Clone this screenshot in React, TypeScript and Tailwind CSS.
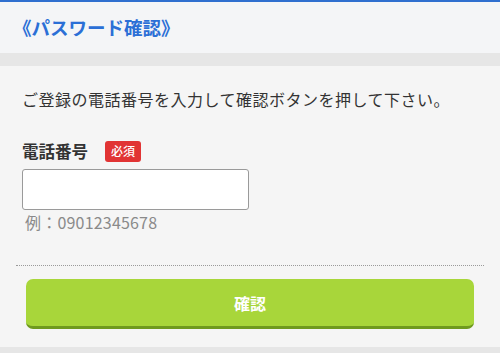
import React from "react";

export default function App() {
  return (
    <div
      className="w-[500px] h-[353px] overflow-hidden bg-[#f5f5f5] flex flex-col"
      style={{ fontFamily: '"Noto Sans CJK JP", "Noto Sans", sans-serif' }}
    >
      <header className="h-[53px] shrink-0 border-t-2 border-[#2f6fcf] bg-[#f4f5f7] flex items-center pl-[13px]">
        <h1 className="text-[18.5px] font-bold text-[#2b6fd6] leading-none">《パスワード確認》</h1>
      </header>
      <div className="h-[13px] shrink-0 bg-[#e6e6e6]" />
      <main className="flex-1 flex flex-col">
        <p className="mt-[21px] ml-[22px] text-[16px] leading-[24px] tracking-[0.5px] text-[#333333]">
          ご登録の電話番号を入力して確認ボタンを押して下さい。
        </p>
        <div className="mt-[29px] ml-[22px] flex items-center gap-[17px] h-[22px]">
          <span className="text-[16.5px] font-bold text-[#333333] leading-none">電話番号</span>
          <span className="bg-[#e13434] text-white text-[12px] font-medium leading-none px-[6px] h-[21px] flex items-center rounded-[3px]">
            必須
          </span>
        </div>
        <input
          type="text"
          className="mt-[7px] ml-[22px] w-[227px] h-[41px] bg-white border border-[#9a9a9a] rounded-[3px] outline-none shrink-0"
        />
        <p className="mt-[0px] ml-[25px] text-[16px] leading-[24px] tracking-[0.2px] text-[#8a8a8a]">例：09012345678</p>
        <div className="mt-[31px] mx-[16px] border-t border-dotted border-[#9a9a9a]" />
        <button className="mt-[13px] mx-[26px] h-[50px] rounded-[7px] bg-[#a8d63a] border-b-[3px] border-[#6f9a1e] text-white text-[16px] font-bold shrink-0">
          確認
        </button>
        <div className="flex-1" />
      </main>
      <div className="h-[6px] shrink-0 bg-[#e6e6e6]" />
    </div>
  );
}
